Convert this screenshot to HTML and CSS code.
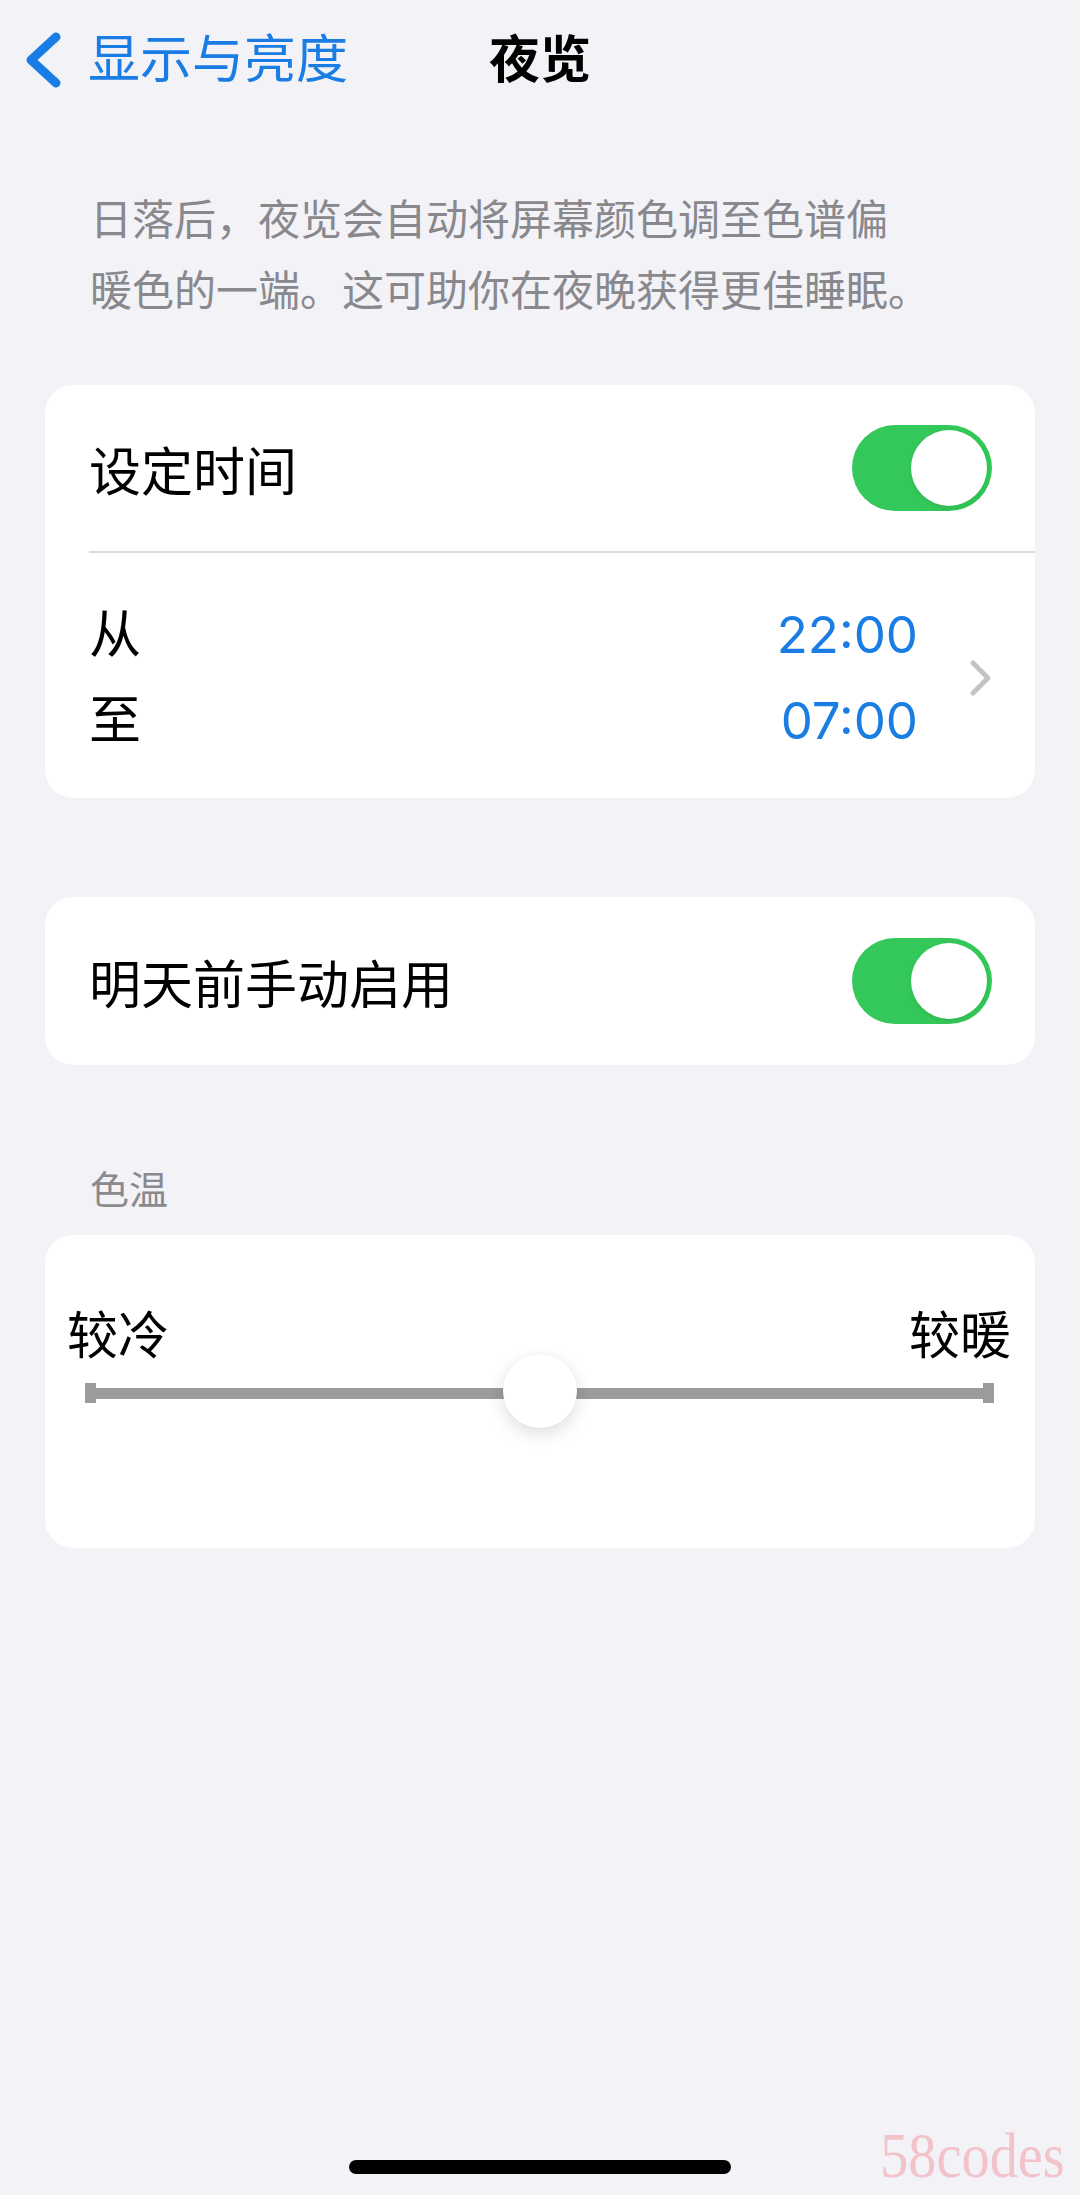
FILE: index.html
```html
<!DOCTYPE html>
<html lang="zh-CN">
<head>
  <meta charset="UTF-8">
  <title>夜览</title>
  <link rel="stylesheet" href="styles.css">
</head>
<body>

<div class="screen">

  <header class="nav">
    <a class="back" href="#">
      <svg class="back-icon" width="35" height="56" viewBox="0 0 35 56">
        <polyline points="30,5 5,28 30,51" fill="none" stroke="#1a7de3" stroke-width="9" stroke-linecap="round" stroke-linejoin="round"/>
      </svg>
      <span>显示与亮度</span>
    </a>
    <h1 class="title">夜览</h1>
    <span></span>
  </header>

  <p class="intro">日落后，夜览会自动将屏幕颜色调至色谱偏<br>暖色的一端。这可助你在夜晚获得更佳睡眠。</p>

  <section class="card first">
    <div class="row divided">
      <span>设定时间</span>
      <span class="switch"><span class="knob"></span></span>
    </div>
    <div class="row times">
      <div class="labels">
        <span>从</span>
        <span>至</span>
      </div>
      <div class="values">
        <span>22:00</span>
        <span>07:00</span>
      </div>
      <svg class="chevron" width="24" height="38" viewBox="0 0 24 38">
        <polyline points="4,4 19,19 4,34" fill="none" stroke="#c4c4c8" stroke-width="5" stroke-linecap="round" stroke-linejoin="round"/>
      </svg>
    </div>
  </section>

  <section class="card second">
    <div class="row">
      <span>明天前手动启用</span>
      <span class="switch"><span class="knob"></span></span>
    </div>
  </section>

  <h2 class="group-title">色温</h2>

  <section class="card temp">
    <div class="temp-labels">
      <span>较冷</span>
      <span>较暖</span>
    </div>
    <div class="slider">
      <span class="cap"></span>
      <span class="bar"></span>
      <span class="cap"></span>
      <span class="thumb"></span>
    </div>
  </section>

  <div class="home-bar"></div>
  <div class="watermark">58codes</div>

</div>

</body>
</html>
```

FILE: styles.css
```css
body {
  margin: 0;
  background-color: #f2f2f7;
}
.screen {
  position: relative;
  width: 1080px;
  height: 2195px;
  overflow: hidden;
  display: flex;
  flex-direction: column;
  background-color: #f2f2f7;
  font-family: "Inter", "Noto Sans CJK SC", sans-serif;
  color: #000;
}

/* top bar */
.nav {
  height: 120px;
  display: grid;
  grid-template-columns: 1fr auto 1fr;
  align-items: center;
}
.back {
  display: flex;
  align-items: center;
  gap: 27px;
  padding-left: 26px;
  color: #1a7de3;
  text-decoration: none;
  font-size: 52px;
  line-height: 60px;
}
.back-icon {
  display: block;
}
.title {
  margin: 0;
  font-size: 51px;
  line-height: 60px;
  font-weight: 700;
}

.intro {
  margin: 64px 0 0;
  padding-left: 90px;
  font-size: 42px;
  line-height: 71px;
  white-space: nowrap;
  color: #88888d;
}

/* grouped cards */
.card {
  margin: 0 45px;
  background-color: #fff;
  border-radius: 28px;
  overflow: hidden;
}
.first {
  margin-top: 59px;
}
.second {
  margin-top: 99px;
}
.row {
  box-sizing: border-box;
  height: 168px;
  margin-left: 44px;
  padding-right: 43px;
  display: flex;
  align-items: center;
  justify-content: space-between;
  font-size: 52px;
}
.divided {
  border-bottom: 2px solid #dcdce0;
}
.times {
  height: 245px;
  padding-top: 5px;
}
.labels, .values {
  display: flex;
  flex-direction: column;
  line-height: 86px;
}
.labels {
  flex: 1;
}
.values {
  align-items: flex-end;
  color: #1a7de3;
  font-size: 51px;
}
.chevron {
  display: block;
  margin-left: 51px;
  margin-right: -1px;
}

.switch {
  position: relative;
  width: 140px;
  height: 86px;
  border-radius: 43px;
  background-color: #34c759;
}
.switch .knob {
  position: absolute;
  top: 5px;
  right: 5px;
  width: 76px;
  height: 76px;
  border-radius: 50%;
  background-color: #fff;
  box-shadow: 0 2px 4px rgba(0, 0, 0, 0.08);
}

.group-title {
  margin: 100px 0 20px;
  padding-left: 90px;
  font-size: 39px;
  line-height: 50px;
  font-weight: 400;
  color: #8a8a8e;
}

/* colour temperature */
.temp {
  height: 313px;
}
.temp-labels {
  margin-top: 73px;
  padding: 0 24px 0 22px;
  display: flex;
  justify-content: space-between;
  font-size: 51px;
  line-height: 56px;
}
.slider {
  position: relative;
  height: 58px;
  margin: 0 41px 0 40px;
  display: flex;
  align-items: center;
}
.cap {
  width: 11px;
  height: 20px;
  background-color: #9b9b9b;
}
.bar {
  flex: 1;
  height: 11px;
  background-color: #9b9b9b;
}
.thumb {
  position: absolute;
  left: 50%;
  top: 50%;
  width: 74px;
  height: 74px;
  margin: -39px 0 0 -37px;
  border-radius: 50%;
  background-color: #fff;
  box-shadow: 0 6px 18px rgba(0, 0, 0, 0.13), 0 0 2px rgba(0, 0, 0, 0.06);
}

.home-bar {
  width: 382px;
  height: 14px;
  margin: auto auto 21px;
  border-radius: 7px;
  background-color: #000;
}
.watermark {
  position: absolute;
  top: 2126px;
  right: 15px;
  font-family: "Liberation Serif", serif;
  font-size: 64px;
  line-height: 60px;
  color: #f2c4ca;
  transform: scaleX(0.88);
  transform-origin: right center;
}
```
